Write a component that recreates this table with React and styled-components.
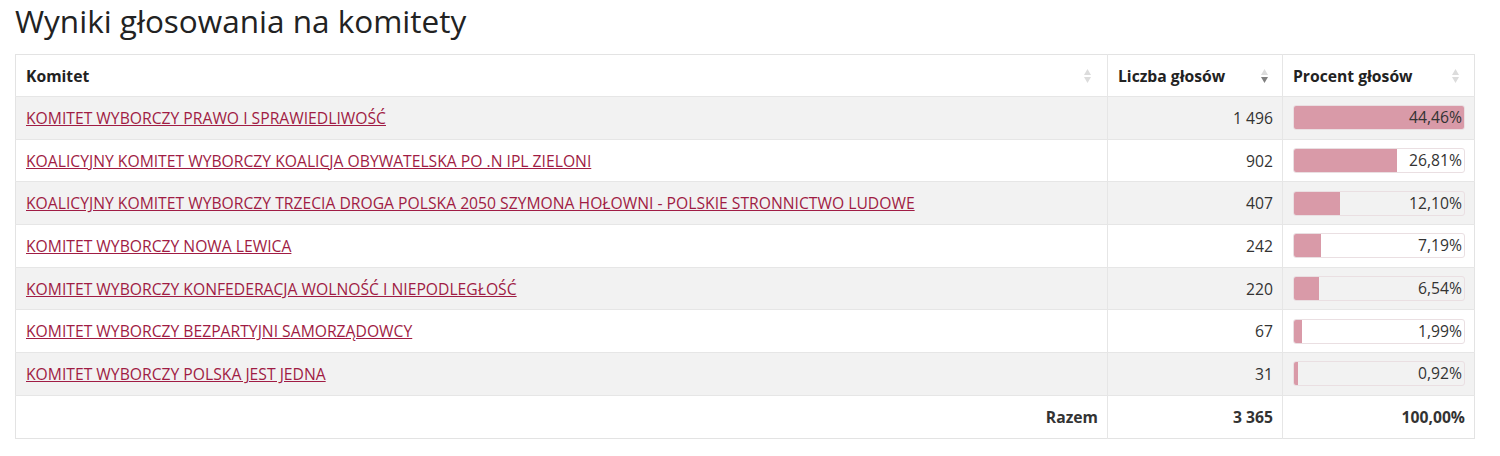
import React from 'react'
import styled, {createGlobalStyle} from 'styled-components';

const GlobalStyle = createGlobalStyle`
  body {
    margin: 0;
    background: #fff;
    font-family: "Open Sans", "Noto Sans", sans-serif;
    color: #333;
  }
`
const Page = styled.div`
  padding: 0 25px 0 15px;
`
const Title = styled.h1`
  margin: 0;
  padding-top: 1px;
  font-size: 31.5px;
  font-weight: 400;
  line-height: 40px;
  color: #222;
`
const Table = styled.table`
  width: 100%;
  margin-top: 13px;
  table-layout: fixed;
  border-collapse: collapse;
  border: 1px solid #e3e3e3;
  font-size: 15.7px;
`
const Th = styled.th`
  position: relative;
  box-sizing: border-box;
  height: 42px;
  padding: 0 30px 0 10px;
  text-align: left;
  font-weight: 700;
  color: #222;
  border-left: 1px solid #e6e6e6;
  width: ${p => p.$w || 'auto'};
  white-space: nowrap;
  &:first-child { border-left: none; }
`
const SortIcon = styled.svg`
  position: absolute;
  right: ${p => p.$right || 12}px;
  top: 50%;
  transform: translateY(-50%);
`
const Row = styled.tr`
  background: ${p => p.$striped ? '#f2f2f2' : '#fff'};
  border-top: 1px solid #e6e6e6;
`
const Td = styled.td`
  height: 41.7px;
  padding: 0 9px 0 10px;
  line-height: 22px;
  text-align: ${p => p.$right ? 'right' : 'left'};
  font-weight: ${p => p.$bold ? 700 : 400};
  color: #333;
  border-left: 1px solid #e6e6e6;
  &:first-child { border-left: none; }
`
const Link = styled.a`
  color: #a01c44;
  text-decoration: underline;
  cursor: pointer;
`
const Bar = styled.div`
  position: relative;
  height: 23px;
  border: 1px solid #eadfe2;
  border-radius: 3px;
  overflow: hidden;
`
const Fill = styled.div`
  position: absolute;
  left: 0;
  top: 0;
  bottom: 0;
  background: #d99aa8;
`
const BarText = styled.span`
  position: relative;
  display: block;
  text-align: right;
  padding-right: 2px;
  line-height: 23px;
  color: #333;
`

const rows = [
  ['KOMITET WYBORCZY PRAWO I SPRAWIEDLIWOŚĆ', '1 496', 44.46],
  ['KOALICYJNY KOMITET WYBORCZY KOALICJA OBYWATELSKA PO .N IPL ZIELONI', '902', 26.81],
  ['KOALICYJNY KOMITET WYBORCZY TRZECIA DROGA POLSKA 2050 SZYMONA HOŁOWNI - POLSKIE STRONNICTWO LUDOWE', '407', 12.10],
  ['KOMITET WYBORCZY NOWA LEWICA', '242', 7.19],
  ['KOMITET WYBORCZY KONFEDERACJA WOLNOŚĆ I NIEPODLEGŁOŚĆ', '220', 6.54],
  ['KOMITET WYBORCZY BEZPARTYJNI SAMORZĄDOWCY', '67', 1.99],
  ['KOMITET WYBORCZY POLSKA JEST JEDNA', '31', 0.92],
]
const max = Math.max(...rows.map(r => r[2]))

const Sort = ({active, right}) => (
  <SortIcon $right={right} width="9" height="16" viewBox="0 0 9 16">
    <path d="M4.5 1 L8 7 L1 7 Z" fill="#dcdcdc" />
    <path d="M4.5 15 L8 9 L1 9 Z" fill={active ? '#808080' : '#dcdcdc'} />
  </SortIcon>
)

const fmt = v => v.toFixed(2).replace('.', ',') + '%'

function App() {
  return (
    <Page>
      <GlobalStyle />
      <Title>Wyniki głosowania na komitety</Title>
      <Table>
        <thead>
          <tr>
            <Th>Komitet<Sort right={15} /></Th>
            <Th $w="175px">Liczba głosów<Sort active right={13} /></Th>
            <Th $w="192px">Procent głosów<Sort right={14} /></Th>
          </tr>
        </thead>
        <tbody>
          {rows.map(([name, votes, pct], i) => (
            <Row key={name} $striped={i % 2 === 0}>
              <Td><Link>{name}</Link></Td>
              <Td $right>{votes}</Td>
              <Td>
                <Bar>
                  <Fill style={{width: `${pct / max * 100}%`}} />
                  <BarText>{fmt(pct)}</BarText>
                </Bar>
              </Td>
            </Row>
          ))}
          <Row>
            <Td $right $bold>Razem</Td>
            <Td $right $bold>3 365</Td>
            <Td $right $bold>100,00%</Td>
          </Row>
        </tbody>
      </Table>
    </Page>
  )
}

export default App
